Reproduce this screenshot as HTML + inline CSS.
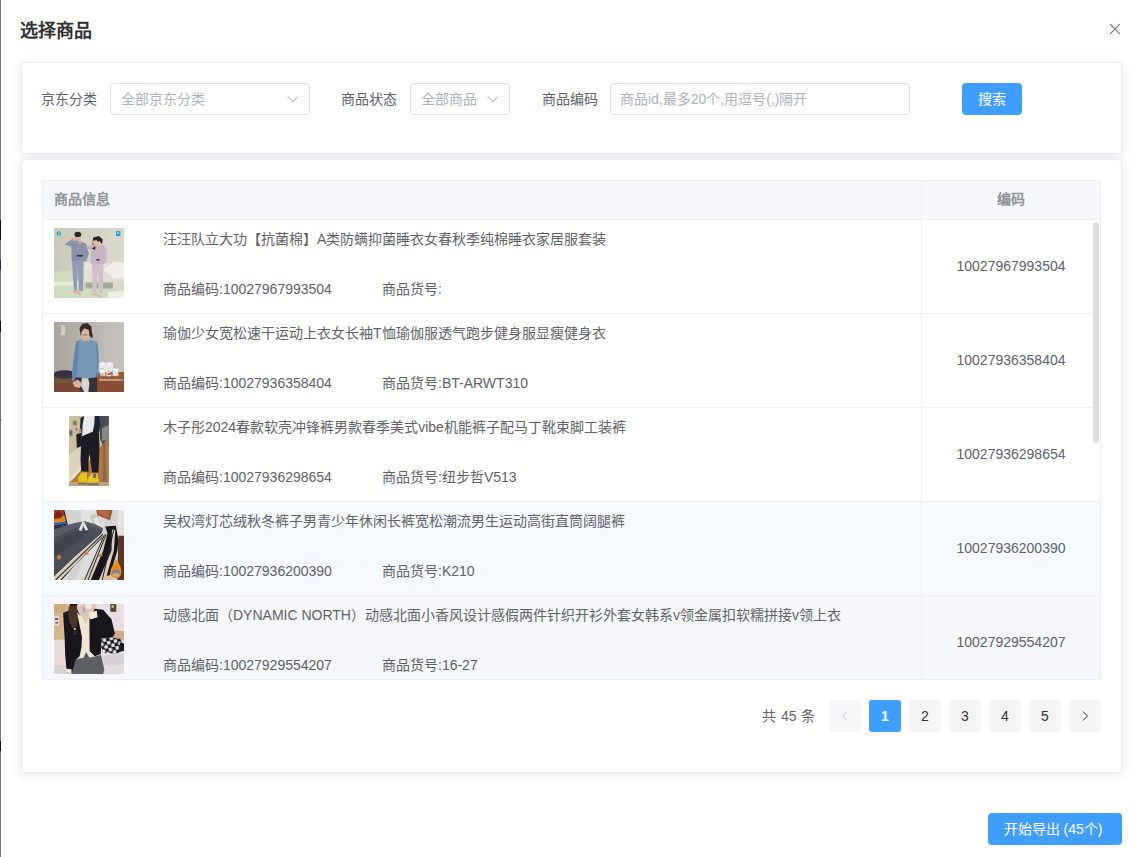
<!DOCTYPE html>
<html lang="zh-CN">
<head>
<meta charset="utf-8">
<title>选择商品</title>
<style>
*{box-sizing:border-box;margin:0;padding:0}
html,body{width:1141px;height:857px;overflow:hidden;background:#fff}
body{font-family:"Liberation Sans",sans-serif;color:#606266;position:relative;font-size:13px}
.abs{position:absolute}
.edge{left:0;top:0;width:1px;height:857px;background:#777}
.edge i{position:absolute;left:0;width:1px;background:#111}
.title{left:20px;top:19px;font-size:18px;line-height:24px;font-weight:bold;color:#303133;white-space:nowrap}
.close{left:1109px;top:23px;width:12px;height:12px}
.card{background:#fff;border:1px solid #e8ebf2;border-radius:4px;box-shadow:0 2px 12px 0 rgba(0,0,0,.1)}
.c1{left:21px;top:62px;width:1101px;height:92px}
.c2{left:21px;top:159px;width:1101px;height:614px}
.lbl{font-size:14px;line-height:32px;color:#606266;white-space:nowrap;top:83px}
.inp{top:83px;height:32px;border:1px solid #dcdfe6;border-radius:4px;background:#fff;font-size:14px;line-height:30px;color:#aeb2b9;padding-left:10px;white-space:nowrap;overflow:hidden}
.arrow{position:absolute;right:10px;top:11px;width:12px;height:8px}
.btn{background:#409eff;color:#fff;border-radius:4px;text-align:center;white-space:nowrap}
.search{left:962px;top:83px;width:60px;height:32px;line-height:32px;font-size:14px;font-weight:500}
.export{left:988px;top:813px;width:134px;height:32px;line-height:32px;font-size:14px;font-weight:500;padding-right:4px}

.tbl{left:42px;top:180px;width:1059px;height:500px;border:1px solid #ebeef5;overflow:hidden;background:#fff}
.th{position:absolute;top:0;height:38px;background:#f5f7fa;font-size:14px;font-weight:bold;color:#909399;line-height:37px;white-space:nowrap}
.hl{position:absolute;left:0;width:1057px;height:1px;background:#ebeef5}
.vl{position:absolute;left:878px;top:0;width:1px;height:498px;background:#ebeef5}
.row{position:absolute;left:0;width:1057px;height:93px;font-size:14px;color:#606266}
.row div{position:absolute;white-space:nowrap;line-height:23px}
.row .t{left:120px;top:8px}
.row .c{left:120px;top:58px}
.row .h{left:339px;top:58px}
.row .n{left:879px;width:178px;top:35px;text-align:center}
.thumb{position:absolute;display:block}
.bar{position:absolute;left:1050px;top:41px;width:6px;height:221px;border-radius:3px;background:#dddee0}

.pg{top:700px;height:32px;line-height:32px;font-size:14px;white-space:nowrap}
.pb{width:32px;border-radius:3px;background:#f4f4f5;color:#303133;text-align:center}
.pb.on{background:#409eff;color:#fff;font-weight:bold}
.pb svg{position:absolute;left:11px;top:10px;width:10px;height:12px}
</style>
</head>
<body>
<div class="abs edge"><i style="top:220px;height:20px"></i><i style="top:260px;height:10px;background:#2a2a3c"></i><i style="top:321px;height:11px"></i><i style="top:419px;height:2px;background:#6a4a3a"></i><i style="top:741px;height:10px"></i></div>
<div class="abs title">选择商品</div>
<svg class="abs close" viewBox="0 0 12 12"><path d="M1.2 1.2L10.8 10.8M10.8 1.2L1.2 10.8" stroke="#6f7379" stroke-width="1.1" fill="none"/></svg>

<div class="abs card c1"></div>
<div class="abs lbl" style="left:41px">京东分类</div>
<div class="abs inp" style="left:110px;width:200px">全部京东分类<svg class="arrow" viewBox="0 0 12 8"><path d="M0.6 1.4L5.8 6.7L11 1.4" stroke="#b9bdc5" stroke-width="1.1" fill="none"/></svg></div>
<div class="abs lbl" style="left:341px">商品状态</div>
<div class="abs inp" style="left:410px;width:100px">全部商品<svg class="arrow" viewBox="0 0 12 8"><path d="M0.6 1.4L5.8 6.7L11 1.4" stroke="#b9bdc5" stroke-width="1.1" fill="none"/></svg></div>
<div class="abs lbl" style="left:542px">商品编码</div>
<div class="abs inp" style="left:610px;width:300px;padding-left:9px">商品id,最多20个,用逗号(,)隔开</div>
<div class="abs btn search">搜索</div>

<div class="abs card c2"></div>
<div class="abs tbl">
<div class="th" style="left:0;width:878px;padding-left:11px">商品信息</div>
<div class="th" style="left:879px;width:178px;text-align:center">编码</div>
<div class="hl" style="top:38px"></div>
<div class="row" style="top:39px;background:#fff"><!--IMG1--><svg class="thumb" style="left:11px;top:8px" width="70" height="70" viewBox="0 0 70 70"><defs><filter id="b1" x="-5%" y="-5%" width="110%" height="110%"><feGaussianBlur stdDeviation="0.55"/></filter><linearGradient id="w1" x1="0" x2="1"><stop offset="0" stop-color="#c8cab7"/><stop offset=".55" stop-color="#d3d4c6"/><stop offset="1" stop-color="#d9d9cd"/></linearGradient><clipPath id="c1"><rect width="70" height="70"/></clipPath></defs><g clip-path="url(#c1)"><rect width="70" height="70" fill="url(#w1)"/><g filter="url(#b1)"><polygon points="-2,44 30,42 72,40 72,72 -2,72" fill="#cfdcc0"/><polygon points="-2,54 30,53 30,57 -2,58" fill="#e6efdc"/><rect x="31" y="54" width="28" height="6.5" fill="#a3ab93"/><polygon points="29.6,34.4 59.6,34.9 70.0,36.5 70.0,54.4 29.6,54.4" fill="#e2ddd2"/><polygon points="49.1,41.7 59.6,33.8 70.0,34.4 70.0,49.1 59.6,50.2" fill="#f1eee8"/><polygon points="59.6,54.4 70.0,54.4 70.0,70.2 53.3,70.2 53.3,64.9 59.6,62.8" fill="#d9d8cf"/><polygon points="30.1,54.4 32.2,54.4 32.2,60.7 30.1,60.7" fill="#c9c9bd"/><polygon points="10.6,16.4 19.1,10.3 22.2,12.8 17.5,18.5" fill="#8b93ab"/><polygon points="17.5,13.3 22.8,12.2 32.2,15.4 34.9,25.9 32.2,33.3 17.5,33.3" fill="#8a92aa"/><polygon points="18.0,32.8 29.6,32.8 29.1,62.8 24.9,63.3 24.0,41.7 22.8,62.8 19.8,62.3" fill="#929bb6"/><rect x="22.8" y="27.0" width="6" height="1.6" fill="#2b2d38"/><ellipse cx="24.3" cy="9.6" rx="2.6" ry="3.3" fill="#d8b09c"/><ellipse cx="23.8" cy="6.4" rx="3.4" ry="2.6" fill="#26262b"/><polygon points="19.6,62.3 23.8,62.8 28.0,66.5 25.9,67.0 18.5,64.4" fill="#d9b39d"/><polygon points="32.8,19.6 40.7,17.0 49.1,17.0 52.3,20.7 52.8,33.3 49.1,36.5 36.5,35.9 37.5,22.8" fill="#c9b3c6"/><polygon points="38.0,35.9 49.1,35.9 48.9,64.9 44.9,65.4 43.6,43.8 42.3,64.9 38.6,64.4" fill="#d2bfcb"/><rect x="42.3" y="31.2" width="3.2" height="1.3" fill="#2b2730"/><ellipse cx="43.3" cy="13.3" rx="2.6" ry="3.2" fill="#dbb8a6"/><polygon points="39.1,9.6 44.9,8.0 48.6,11.2 48.1,16.4 45.9,13.3 41.7,13.3 41.2,21.7 38.0,20.7" fill="#2c2226"/><polygon points="36.5,65.4 42.8,65.4 48.1,68.1 47.0,69.1 38.6,67.0" fill="#dab6a1"/><polygon points="24.0,12.8 27.8,12.8 25.9,17.5" fill="#d6ae9a"/><polygon points="17.8,9.3 21.5,8.5 22.2,12.2 19.1,13.1" fill="#d9b19c"/><polygon points="38.6,12.8 42.8,12.0 43.6,18.0 39.8,18.5" fill="#dcb7a5"/><polygon points="32.8,19.1 39.1,16.4 40.7,18.5 35.4,22.2" fill="#c9b3c6"/><polygon points="42.8,17.0 46.5,17.0 44.5,21.7" fill="#dbb6a4"/><polygon points="29.6,41.7 31.2,34.9 36.5,34.4 37.5,41.7" fill="#e8e4da"/><polygon points="54.4,63.9 70.0,62.8 70.0,70.2 53.3,70.2" fill="#efefe9"/></g><circle cx="4.8" cy="5.4" r="2.2" fill="#1b9fd1"/><rect x="62.0" y="3.0" width="4.4" height="5" rx=".6" fill="#1b9fd1"/><rect x="4.2" y="4.4" width="1.2" height="2" fill="#bfe6f5"/><rect x="63.4" y="3.8" width="1.4" height="2.4" fill="#bfe6f5"/></g></svg><!--/IMG1--><div class="t">汪汪队立大功【抗菌棉】A类防螨抑菌睡衣女春秋季纯棉睡衣家居服套装</div><div class="c">商品编码:10027967993504</div><div class="h">商品货号:</div><div class="n">10027967993504</div></div>
<div class="hl" style="top:132px"></div>
<div class="row" style="top:133px;background:#fff"><!--IMG2--><svg class="thumb" style="left:11px;top:8px" width="70" height="70" viewBox="0 0 70 70"><defs><filter id="b2" x="-5%" y="-5%" width="110%" height="110%"><feGaussianBlur stdDeviation="0.55"/></filter><linearGradient id="w2" x1="0" x2="1"><stop offset="0" stop-color="#a9a49d"/><stop offset=".6" stop-color="#bbb8b3"/><stop offset="1" stop-color="#c4c2be"/></linearGradient><clipPath id="c2"><rect width="70" height="70"/></clipPath></defs><g clip-path="url(#c2)"><rect width="70" height="70" fill="url(#w2)"/><g filter="url(#b2)"><rect x="5.4" y="3.2" width="5.8" height="10" rx="1" fill="#cfccc5"/><rect x="5.4" y="3.7" width="1.4" height="9" fill="#9b958f"/><polygon points="0.0,51.1 70.0,50.1 70.0,69.9 0.0,69.9" fill="#8d4e30"/><polygon points="0.0,55.3 42.8,56.4 42.8,69.9 0.0,69.9" fill="#7a4630"/><polygon points="0.0,56.9 17.5,56.4 17.5,60.6 0.0,61.6" fill="#6d5a3c"/><ellipse cx="10.6" cy="52.4" rx="11.5" ry="4.2" fill="#393344"/><polygon points="22.8,51.1 42.8,51.1 43.3,69.9 28.0,69.9 20.7,61.6" fill="#36323f"/><polygon points="28.0,55.3 33.8,54.8 35.4,61.6 34.4,69.9 30.1,69.9 27.0,63.8" fill="#d9d6d2"/><polygon points="18.5,60.6 23.8,57.4 28.0,61.6 25.9,65.9 20.7,64.8" fill="#d7b19c"/><polygon points="22.8,18.7 28.0,17.6 38.0,17.9 43.6,19.7 44.5,32.1 42.8,46.9 42.3,55.3 32.2,56.4 22.2,55.3 18.0,59.5 18.0,51.1 20.7,32.1" fill="#7697b5"/><polygon points="22.2,19.5 25.4,19.5 22.8,51.1 20.7,57.4 18.0,57.4 19.6,35.3" fill="#6387a8"/><polygon points="41.7,21.6 44.0,22.7 44.9,37.4 44.0,55.3 42.5,55.3 42.8,38.5" fill="#6a8cac"/><ellipse cx="31.4" cy="12.6" rx="4" ry="5.6" fill="#d9b5a4"/><rect x="29.9" y="16.3" width="3" height="3" fill="#d5ae9c"/><polygon points="25.4,6.8 28.0,2.1 33.3,1.1 37.5,4.7 38.0,15.3 35.4,14.2 34.9,7.9 30.1,6.3 27.5,10.0 27.0,14.2" fill="#3a2723"/><rect x="28.6" y="11.9" width="4.6" height="1.6" fill="#b98273"/><polygon points="36.2,10.5 38.4,11.6 38.6,16.3 37.0,15.5" fill="#3a2723"/><polygon points="28.9,16.3 33.8,16.1 35.4,18.7 28.0,18.4" fill="#d7b09e"/><polygon points="44.9,57.4 70.0,56.9 70.0,51.1 44.9,51.6" fill="#9a5a38"/></g><g fill="#fff" font-family="Liberation Sans,sans-serif" font-weight="bold"><text x="44.6" y="46.3" font-size="7.2" textLength="14" lengthAdjust="spacingAndGlyphs">肉肉</text><text x="44.6" y="53.3" font-size="7.2" textLength="20.5" lengthAdjust="spacingAndGlyphs">有它罩</text></g><rect x="45" y="57.2" width="24" height="1.5" fill="#fff" opacity=".55"/></g></svg><!--/IMG2--><div class="t">瑜伽少女宽松速干运动上衣女长袖T恤瑜伽服透气跑步健身服显瘦健身衣</div><div class="c">商品编码:10027936358404</div><div class="h">商品货号:BT-ARWT310</div><div class="n">10027936358404</div></div>
<div class="hl" style="top:226px"></div>
<div class="row" style="top:227px;background:#fff"><!--IMG3--><svg class="thumb" style="left:26px;top:8px" width="40" height="70" viewBox="0 0 40 70"><defs><filter id="b3" x="-5%" y="-5%" width="110%" height="110%"><feGaussianBlur stdDeviation="0.5"/></filter><clipPath id="c3"><rect width="40" height="70"/></clipPath></defs><g clip-path="url(#c3)"><rect width="40" height="70" fill="#cbbd9f"/><g filter="url(#b3)"><polygon points="0.0,38.5 15.2,27.9 15.2,61.6 0.0,63.8" fill="#ddd3bd"/><polygon points="29.9,0.0 39.8,0.0 39.8,30.0 34.1,30.0 31.0,22.7" fill="#4a4c50"/><polygon points="33.1,12.1 39.8,9.0 39.8,23.7 33.1,24.8" fill="#858a88"/><polygon points="0.0,65.9 5.7,61.6 25.7,37.4 34.1,27.9 39.8,21.6 39.8,66.4" fill="#b8763c"/><polygon points="0.0,63.2 23.6,37.4 25.7,38.5 2.5,64.8 0.0,65.9" fill="#e9e2d2"/><polygon points="34.1,27.9 36.2,24.8 36.8,65.9 34.1,65.9" fill="#6f6a60"/><polygon points="0.0,65.9 39.8,65.9 39.8,69.9 0.0,69.9" fill="#c59f7e"/><rect x="4.1" y="4.7" width="3.6" height="4.6" fill="#8b7a45"/><rect x="0.4" y="14.2" width="3" height="5.4" fill="#6b6b6b"/><rect x="6.7" y="11.9" width="1.4" height="2.6" fill="#5a6a8a"/><polygon points="11.5,2.1 15.2,0.0 29.9,0.0 31.5,9.0 29.9,16.3 23.6,16.3 13.1,19.5 11.0,13.2" fill="#1e2230"/><polygon points="15.2,0.0 25.7,0.0 25.2,9.0 23.6,16.3 13.1,20.5 13.6,9.0" fill="#e9e9ec"/><polygon points="7.3,18.4 12.5,16.3 13.1,30.0 7.8,32.1" fill="#1b1c20"/><polygon points="9.4,13.2 12.0,12.6 12.5,16.9 9.9,17.4" fill="#c9977f"/><polygon points="12.5,20.5 23.6,15.8 29.9,16.3 30.5,30.0 29.9,46.9 29.4,56.4 23.1,56.4 20.4,37.4 19.4,46.9 19.6,55.8 12.2,55.3 11.5,42.7" fill="#1c1d23"/><polygon points="8.9,61.6 12.5,56.4 17.8,56.4 18.3,65.3 17.3,68.0 9.4,68.0" fill="#e5c022"/><polygon points="18.3,63.8 22.6,56.9 28.3,56.9 29.9,65.3 29.4,68.8 18.9,69.0" fill="#e6c226"/><polygon points="8.6,66.4 17.8,66.4 17.8,68.5 8.9,68.5" fill="#77746c"/><polygon points="18.3,67.1 29.9,66.7 29.9,69.2 18.5,69.4" fill="#7a776f"/><rect x="24.1" y="57.4" width="3" height="4.4" fill="#5d6a86"/></g></g></svg><!--/IMG3--><div class="t">木子彤2024春款软壳冲锋裤男款春季美式vibe机能裤子配马丁靴束脚工装裤</div><div class="c">商品编码:10027936298654</div><div class="h">商品货号:纽步哲V513</div><div class="n">10027936298654</div></div>
<div class="hl" style="top:320px"></div>
<div class="row" style="top:321px;background:#f6f9fe"><!--IMG4--><svg class="thumb" style="left:11px;top:8px" width="70" height="70" viewBox="0 0 70 70"><defs><filter id="b4" x="-5%" y="-5%" width="110%" height="110%"><feGaussianBlur stdDeviation="0.5"/></filter><clipPath id="c4"><rect width="70" height="70"/></clipPath></defs><g clip-path="url(#c4)"><rect width="70" height="70" fill="#d5d3cf"/><g filter="url(#b4)"><polygon points="63.9,0.0 70.0,0.0 70.0,25.8 63.9,25.8" fill="#e6e3df"/><polygon points="64.4,25.8 70.0,25.8 70.0,69.9 63.3,69.9" fill="#5c3527"/><polygon points="27.0,0.0 42.8,0.0 50.2,14.2 47.5,19.5 35.4,15.5 28.0,13.2" fill="#e3e3e1"/><polygon points="35.4,5.8 42.8,3.7 48.1,14.2 44.9,17.9 38.6,14.2" fill="#c9c9c7"/><polygon points="38.6,9.0 43.3,7.4 47.0,14.8 44.4,16.9" fill="#e6e6e4"/><polygon points="42.3,0.0 58.6,0.0 56.0,10.2 43.3,5.3" fill="#9d573a"/><polygon points="44.9,1.1 55.4,1.1 53.8,7.4 45.9,4.2" fill="#b56a45"/><polygon points="0.0,0.0 10.3,0.0 13.7,14.2 0.0,17.6" fill="#1c1a1c"/><polygon points="0.0,0.0 9.3,0.0 12.2,12.3 0.0,15.1" fill="#a83a1a"/><polygon points="0.0,6.3 10.6,5.8 11.8,11.6 0.0,14.2" fill="#d98228"/><polygon points="0.0,3.7 4.8,0.5 9.3,3.7 7.0,7.9 0.0,9.0" fill="#7a2a18"/><polygon points="0.0,13.0 12.2,11.7 12.6,13.8 0.0,16.1" fill="#3560b4"/><polygon points="0.0,17.6 13.7,14.2 17.5,17.9 0.0,29.5" fill="#2c2c30"/><polygon points="0.0,19.5 12.2,15.5 22.8,12.8 31.2,11.6 40.7,14.2 49.1,18.4 47.5,23.5 20.7,47.1 0.0,66.7" fill="#4b4e58"/><polygon points="0.0,19.5 12.2,15.5 22.8,12.8 31.2,11.6 40.7,14.2 49.1,18.4 44.9,19.5 31.2,15.5 17.5,19.5 0.0,27.9" fill="#5a5d67"/><polygon points="0.0,33.2 20.7,21.6 35.4,20.5 20.7,34.2 0.0,46.9" fill="#41444e"/><polygon points="24.7,20.0 28.2,11.9 30.1,11.7 34.1,19.5 31.8,20.8 29.3,16.1 27.2,21.2" fill="#e6e6e8"/><polygon points="47.5,23.5 53.3,22.7 20.7,55.3 8.5,69.9 0.0,69.9 0.0,66.7 20.7,47.1" fill="#dad1be"/><line x1="48.9" y1="24.2" x2="1.7" y2="69.9" stroke="#232326" stroke-width="1.1"/><line x1="51.4" y1="24.2" x2="7.0" y2="69.9" stroke="#232326" stroke-width="1.1"/><polygon points="53.3,23.2 56.3,32.1 42.8,69.9 8.5,69.9 20.7,55.3" fill="#dddddd"/><polygon points="20.7,55.3 30.1,46.9 20.7,69.9 12.2,69.9" fill="#cfcfcd"/><polygon points="49.1,24.6 53.5,23.2 49.6,40.6 36.7,69.9 28.0,69.9 44.9,40.6" fill="#d6cdb9"/><line x1="50.4" y1="24.8" x2="30.7" y2="69.9" stroke="#232326" stroke-width="1.0"/><line x1="52.1" y1="24.2" x2="34.1" y2="69.9" stroke="#232326" stroke-width="1.0"/><polygon points="51.2,16.5 61.7,15.8 64.5,30.0 63.4,40.6 54.6,69.9 36.7,69.9 49.3,40.6 53.5,23.2" fill="#18181a"/><polygon points="58.0,19.5 61.3,20.0 59.9,40.6 51.4,69.9 44.9,69.9 57.5,40.6" fill="#d9d0bc"/><line x1="59.7" y1="20.0" x2="48.3" y2="69.9" stroke="#222" stroke-width="1.0"/><polygon points="2.2,46.9 5.4,44.6 7.5,47.7 4.3,50.1" fill="#c07f3e"/><polygon points="29.1,42.9 33.8,41.8 35.0,44.3 30.7,45.6" fill="#c58a4a"/><polygon points="44.0,44.8 48.3,43.9 48.7,46.0 44.7,47.1" fill="#b87a38"/><polygon points="50.2,66.1 57.5,65.0 58.6,69.9 49.1,69.9" fill="#e0b9a0"/><path d="M61.7 49.5 C69.1 56.4 69.1 68.0 62.3 68.5 C54.4 68.0 55.4 58.5 59.6 55.3 Z" fill="#ef8a1a"/><ellipse cx="62.0" cy="62.9" rx="4" ry="3.4" fill="#6f7f98"/><ellipse cx="62.0" cy="64.8" rx="3.6" ry="2" fill="#d8a070"/></g></g></svg><!--/IMG4--><div class="t">吴权湾灯芯绒秋冬裤子男青少年休闲长裤宽松潮流男生运动高街直筒阔腿裤</div><div class="c">商品编码:10027936200390</div><div class="h">商品货号:K210</div><div class="n">10027936200390</div></div>
<div class="hl" style="top:414px"></div>
<div class="row" style="top:415px;background:#f5f7fa"><!--IMG5--><svg class="thumb" style="left:11px;top:8px" width="70" height="70" viewBox="0 0 70 70"><defs><filter id="b5" x="-5%" y="-5%" width="110%" height="110%"><feGaussianBlur stdDeviation="0.55"/></filter><pattern id="ck" width="7" height="7" patternUnits="userSpaceOnUse" patternTransform="rotate(-14)"><rect width="7" height="7" fill="#17171b"/><circle cx="1.75" cy="1.75" r="1.9" fill="#e4e4e8"/><circle cx="5.25" cy="5.25" r="1.9" fill="#e4e4e8"/></pattern><clipPath id="c5"><rect width="70" height="70"/></clipPath></defs><g clip-path="url(#c5)"><rect width="70" height="70" fill="#e6e0e5"/><g filter="url(#b5)"><polygon points="0.0,0.0 15.4,0.0 15.4,36.4 0.0,36.4" fill="#d8b68f"/><polygon points="0.0,0.0 11.2,0.0 11.2,9.0 0.0,9.0" fill="#cfa97e"/><rect x="0" y="12.1" width="4.8" height="9.4" fill="#dcdcd6"/><rect x="1" y="14.2" width="3" height="1.6" fill="#444"/><rect x="1.4" y="17.9" width="2.4" height="1.6" fill="#555"/><polygon points="44.9,25.8 70.0,26.9 70.0,36.4 44.9,35.3" fill="#d3aa85"/><rect x="56.3" y="0" width="6" height="7.8" fill="#4c4b30"/><rect x="57.5" y="1" width="2.4" height="3" fill="#b8b070"/><polygon points="0.0,35.8 17.5,35.3 17.5,69.9 0.0,69.9" fill="#e9dcd7"/><polygon points="0.0,61.6 17.5,60.6 17.5,69.9 0.0,69.9" fill="#d9d2d0"/><polygon points="44.9,46.9 70.0,49.0 70.0,69.9 44.9,69.9" fill="#e2dcde"/><polygon points="49.1,51.1 70.0,50.1 70.0,60.6 50.2,61.6" fill="#d6d3d8"/><polygon points="47.5,35.3 53.3,33.0 67.0,34.8 69.1,44.8 63.9,49.5 50.2,49.0 47.0,42.7" fill="url(#ck)"/><polygon points="66.0,38.5 70.0,39.5 70.0,46.9 64.9,47.9" fill="#1a1a1e"/><polygon points="15.4,0.0 23.8,0.0 22.8,2.1 16.4,2.6" fill="#17161a"/><polygon points="22.8,1.6 35.4,1.6 36.5,15.3 32.2,22.7 27.0,15.3" fill="#e2c4b4"/><polygon points="28.0,0.0 42.3,0.0 42.8,5.8 36.5,9.5 29.1,7.9" fill="#e3c3b3"/><polygon points="31.0,0.0 37.5,0.0 37.1,4.7 31.8,4.7" fill="#efece0"/><polygon points="28.6,3.7 31.2,3.2 31.4,7.9 29.1,8.4" fill="#9aa6c6"/><polygon points="9.1,9.0 17.5,5.3 22.8,4.7 28.0,15.3 30.1,35.3 28.0,51.1 22.2,55.3 21.7,69.9 12.8,68.5 11.2,51.1 10.6,33.2" fill="#15151b"/><polygon points="40.7,4.7 49.1,5.8 57.5,15.3 60.9,29.5 58.6,33.2 47.5,34.2 46.8,50.1 40.7,52.2 35.4,46.9 35.2,15.3" fill="#15151b"/><polygon points="14.9,2.1 22.8,1.4 24.3,12.1 22.8,22.7 19.1,24.8 15.9,19.5 14.1,11.1" fill="#4b302a"/><polygon points="23.0,8.4 28.0,12.6 32.0,20.5 35.2,12.1 35.4,46.9 40.7,52.7 35.4,53.7 32.2,47.4 29.6,53.7 25.4,53.2 27.5,42.7 28.0,33.2" fill="#eee6cf"/><polygon points="34.9,8.4 42.8,6.8 43.6,13.2 36.2,15.5" fill="#f0ebdc"/><polygon points="21.7,55.3 29.6,53.7 32.2,47.9 35.4,53.7 47.0,51.1 50.4,65.9 49.1,69.9 17.5,69.9" fill="#5d5e65"/><polygon points="12.0,64.8 17.5,65.3 17.5,69.2 12.2,68.5" fill="#f1ece0"/><rect x="19.8" y="24.2" width="2" height="1.8" fill="#cfd3d8"/><rect x="19.4" y="27.1" width="3.4" height="4" fill="#3a2a26"/></g></g></svg><!--/IMG5--><div class="t">动感北面（DYNAMIC NORTH）动感北面小香风设计感假两件针织开衫外套女韩系v领金属扣软糯拼接v领上衣</div><div class="c">商品编码:10027929554207</div><div class="h">商品货号:16-27</div><div class="n">10027929554207</div></div>
<div class="vl"></div><div class="bar"></div>
</div>
<div class="abs pg" style="left:762px;color:#606266;word-spacing:1px">共 45 条</div>
<div class="abs pg pb" style="left:829px;background:#f5f6f8"><svg viewBox="0 0 10 12"><path d="M7 1.5L2.5 6L7 10.5" stroke="#c0c4cc" stroke-width="1" fill="none"/></svg></div>
<div class="abs pg pb on" style="left:869px">1</div>
<div class="abs pg pb" style="left:909px">2</div>
<div class="abs pg pb" style="left:949px">3</div>
<div class="abs pg pb" style="left:989px">4</div>
<div class="abs pg pb" style="left:1029px">5</div>
<div class="abs pg pb" style="left:1069px"><svg viewBox="0 0 10 12"><path d="M3 1.5L7.5 6L3 10.5" stroke="#303133" stroke-width="1" fill="none"/></svg></div>
<div class="abs btn export">开始导出 (45个)</div>
</body>
</html>
